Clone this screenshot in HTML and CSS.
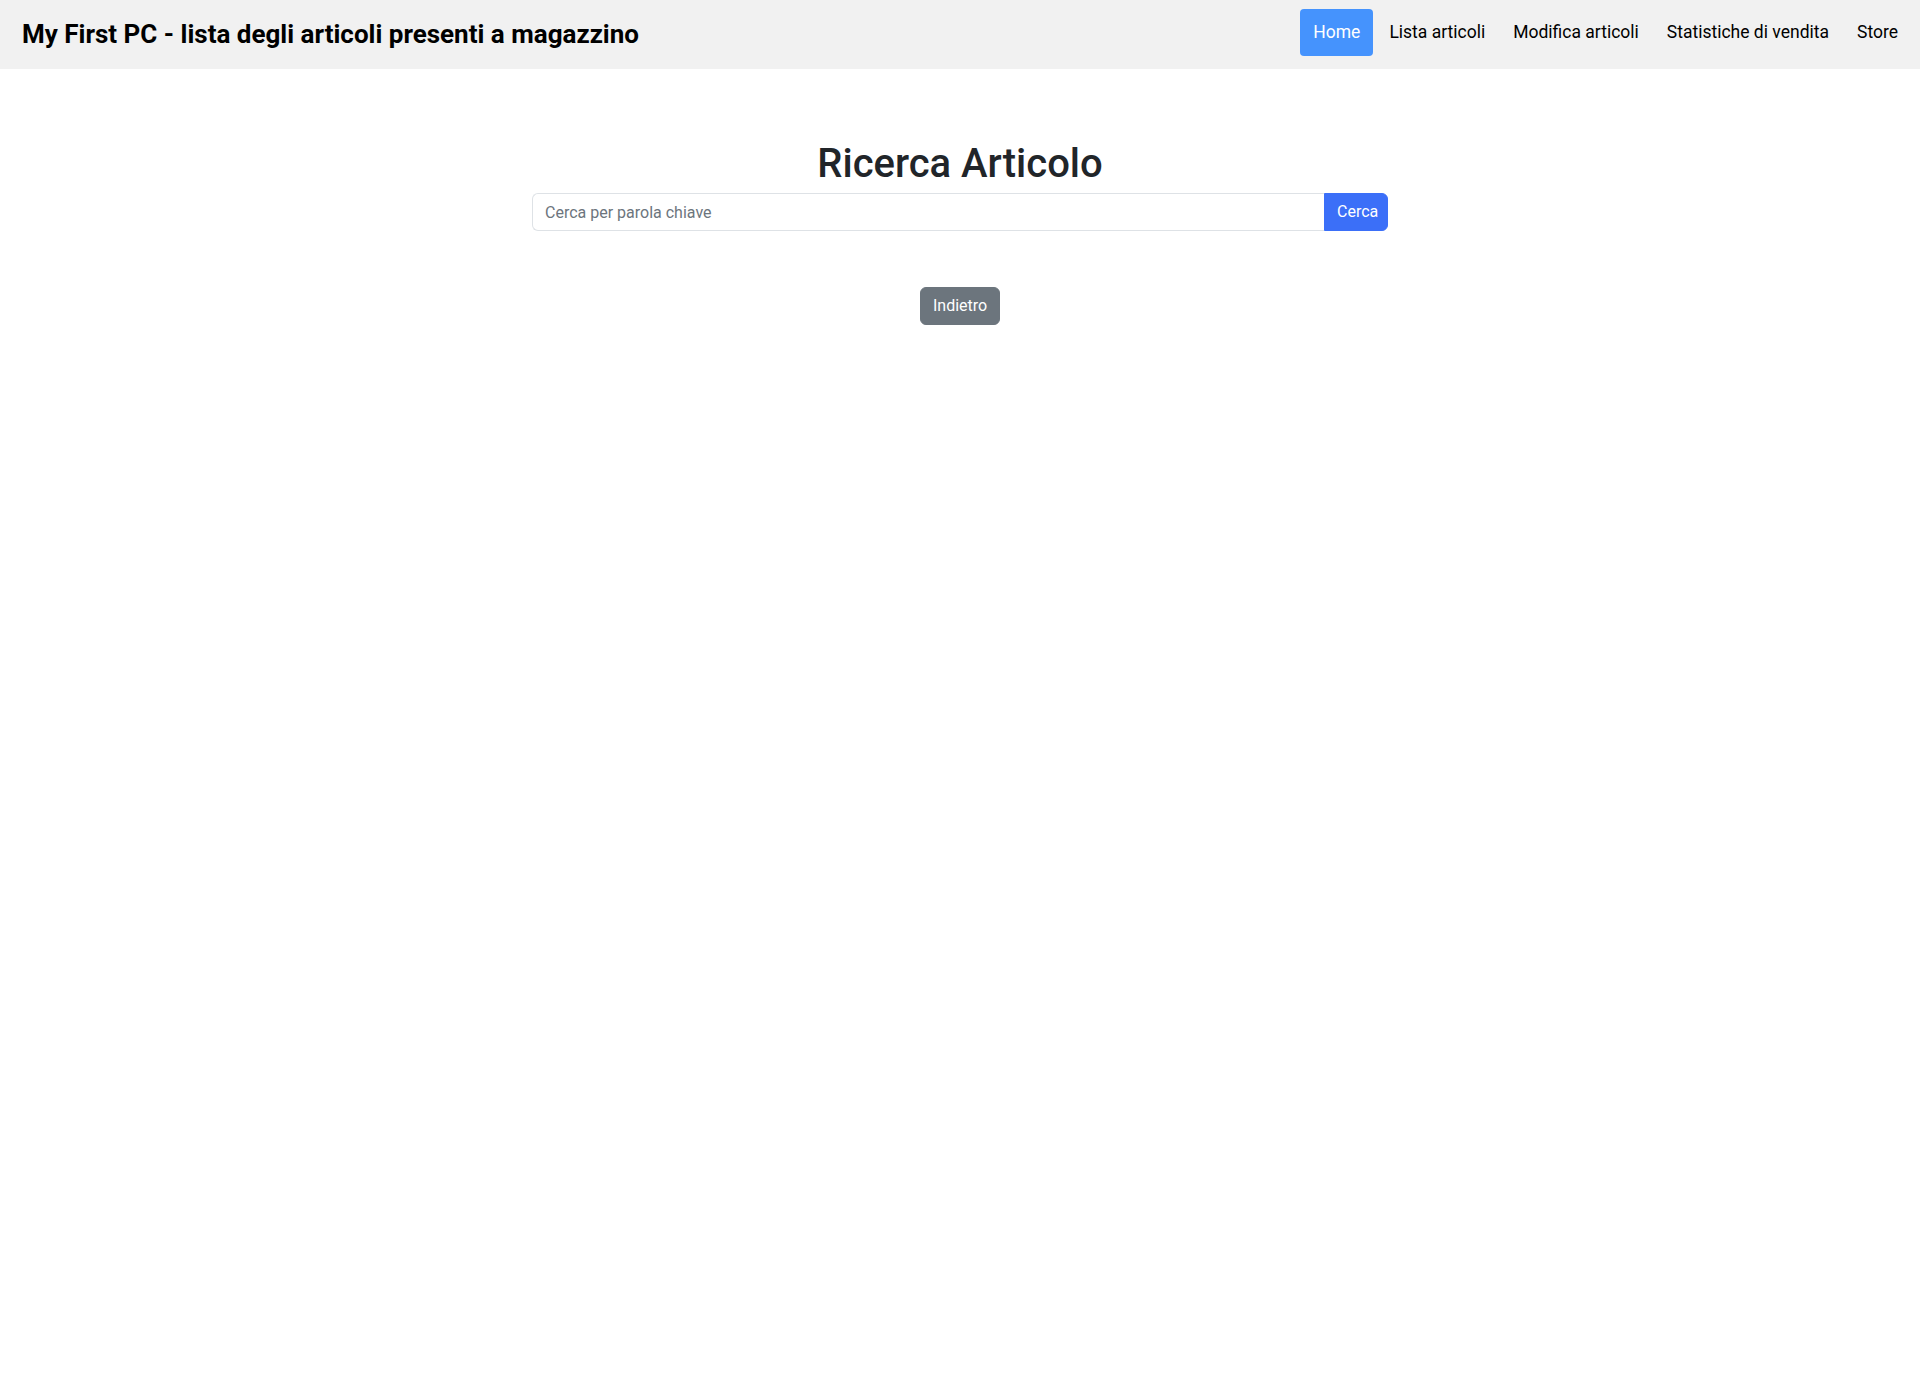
FILE: index.html
```html
<!DOCTYPE html>
<html lang="it">
<head>
<meta charset="utf-8">
<title>My First PC</title>
<link rel="stylesheet" href="styles.css">
</head>
<body>
<header class="topbar">
  <div class="brand">My First PC - lista degli articoli presenti a magazzino</div>
  <nav class="nav">
    <a class="nav-link active" href="#">Home</a>
    <a class="nav-link" href="#">Lista articoli</a>
    <a class="nav-link" href="#">Modifica articoli</a>
    <a class="nav-link" href="#">Statistiche di vendita</a>
    <a class="nav-link" href="#">Store</a>
  </nav>
</header>
<main class="main">
  <section class="search-col">
    <h1 class="title">Ricerca Articolo</h1>
    <form class="input-group">
      <input class="form-control" type="text" placeholder="Cerca per parola chiave">
      <button class="btn btn-primary" type="button">Cerca</button>
    </form>
  </section>
  <div class="back-row">
    <button class="btn btn-secondary" type="button">Indietro</button>
  </div>
</main>
</body>
</html>
```

FILE: styles.css
```css
* { box-sizing: border-box; }
html, body { margin: 0; padding: 0; }
body {
  font-family: Roboto, "Liberation Sans", sans-serif;
  font-size: 16px;
  line-height: 1.5;
  color: #212529;
  background: #fff;
}
.topbar {
  height: 69px;
  background: #f1f1f1;
  display: flex;
  align-items: center;
  justify-content: space-between;
  padding: 0 10px 0 22px;
}
.brand {
  font-size: 26px;
  font-weight: 700;
  color: #000;
  margin-top: -1px;
}
.nav {
  display: flex;
  align-items: center;
  gap: 4px;
  margin-top: -5px;
}
.nav-link {
  font-size: 17.5px;
  line-height: 27px;
  padding: 10px 12px;
  color: #000;
  text-decoration: none;
  border-radius: 4px;
}
.nav-link.active {
  background: #4593fd;
  color: #fff;
  padding: 10px 13px;
}
.main {
  display: flex;
  flex-direction: column;
  align-items: center;
  padding-top: 71px;
}
.search-col {
  width: 856px;
  display: flex;
  flex-direction: column;
  align-items: stretch;
}
.title {
  margin: 0 0 5px;
  font-size: 40px;
  font-weight: 500;
  line-height: 1.2;
  text-align: center;
}
.input-group {
  display: flex;
  margin: 0;
}
.form-control {
  flex: 1;
  height: 38px;
  padding: 6px 12px;
  font: inherit;
  font-size: 16px;
  color: #212529;
  border: 1px solid #dee2e6;
  border-right: 0;
  border-radius: 6px 0 0 6px;
  outline: none;
}
.form-control::placeholder { color: #6c757d; }
.btn {
  font: inherit;
  font-size: 16px;
  line-height: 24px;
  padding: 6px 12px;
  border: 1px solid transparent;
  border-radius: 6px;
  color: #fff;
  cursor: pointer;
}
.btn-primary {
  background: #3b6ff8;
  border-color: #3b6ff8;
  border-radius: 0 6px 6px 0;
  width: 64px;
}
.btn-secondary {
  background: #6c757d;
  border-color: #6c757d;
  width: 80px;
}
.back-row {
  margin-top: 56px;
  display: flex;
  justify-content: center;
}
```
